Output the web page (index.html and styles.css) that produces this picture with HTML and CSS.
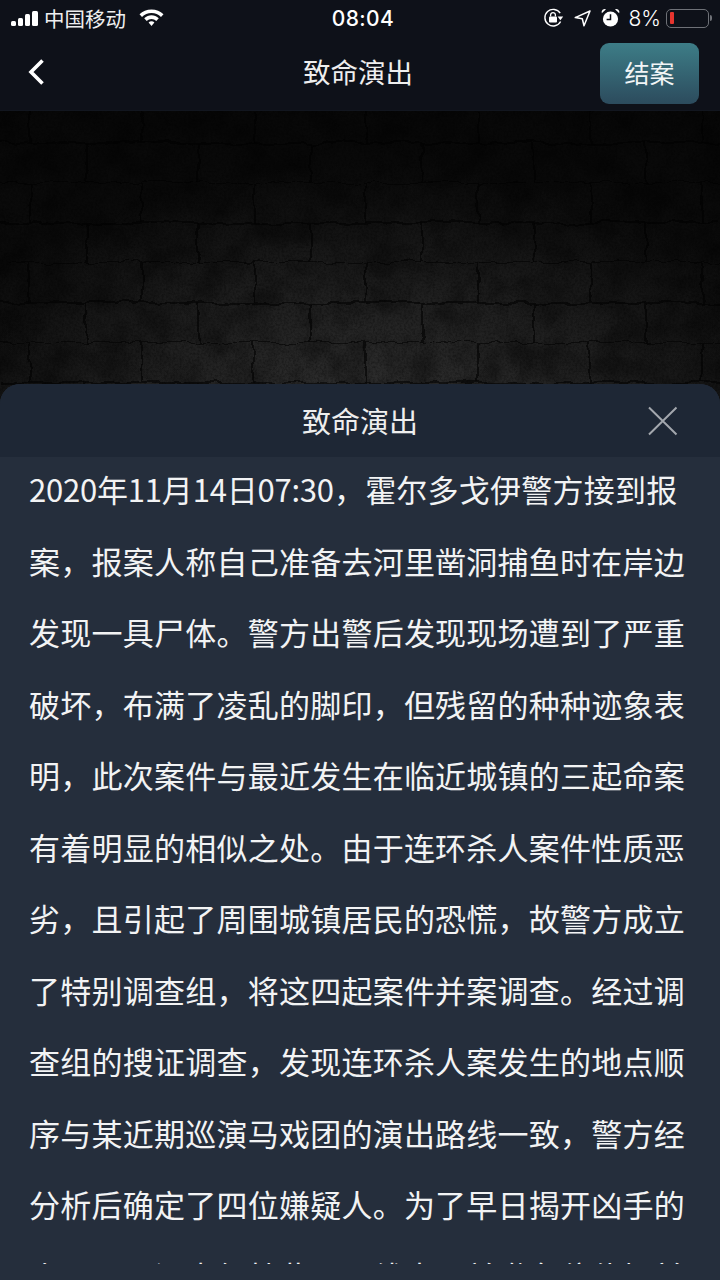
FILE: index.html
```html
<!DOCTYPE html>
<html lang="zh-CN">
  <head>
    <meta charset="UTF-8" />
    <meta name="viewport" content="width=device-width, initial-scale=1.0" />
    <title>致命演出</title>
    <link rel="stylesheet" href="styles.css">
  </head>
  <body>
    <div class="page">
      <header class="top">
        <div class="status">
          <div class="status-left">
            <div class="signal">
              <span class="bar bar-1"></span>
              <span class="bar bar-2"></span>
              <span class="bar bar-3"></span>
              <span class="bar bar-4"></span>
            </div>
            <span class="carrier">中国移动</span>
            <svg class="wifi" width="25" height="18" viewBox="0 0 25 18">
              <path d="M12.5 0.5C7.8 0.5 3.6 2.3 0.5 5.3L3 8C5.5 5.6 8.8 4.1 12.5 4.1S19.5 5.6 22 8L24.5 5.3C21.4 2.3 17.2 0.5 12.5 0.5Z" fill="#fff"/>
              <path d="M12.5 6.3C9.9 6.3 7.3 7.3 5.2 9.3L7.7 12C9 10.7 10.7 9.9 12.5 9.9S16 10.7 17.3 12L19.8 9.3C17.7 7.3 15.1 6.3 12.5 6.3Z" fill="#fff"/>
              <path d="M12.5 12.2C11.4 12.2 10.4 12.6 9.6 13.4L12.5 17L15.4 13.4C14.6 12.6 13.6 12.2 12.5 12.2Z" fill="#fff"/>
            </svg>
          </div>
          <span class="time">08:04</span>
          <div class="status-right">
            <svg class="icon-lock" width="21" height="20" viewBox="0 0 21 20">
              <path d="M17.6 13.5A8.3 8.3 0 1 1 17.2 5.2" fill="none" stroke="#fff" stroke-width="1.4"/>
              <path d="M14.8 9.4H20.4L17.6 13.2Z" fill="#fff" transform="translate(-0.2 -1)"/>
              <rect x="6" y="8.6" width="8" height="6" rx="1" fill="#fff"/>
              <path d="M7.6 8.6V7A2.4 2.4 0 0 1 12.4 7V8.6" fill="none" stroke="#fff" stroke-width="1.3"/>
            </svg>
            <svg class="icon-arrow" width="17" height="17" viewBox="0 0 17 17">
              <path d="M16 1L1.2 7.6L8.3 8.8L10 15.8Z" fill="none" stroke="#fff" stroke-width="1.5" stroke-linejoin="round"/>
            </svg>
            <svg class="icon-alarm" width="19" height="20" viewBox="0 0 19 20">
              <circle cx="9.5" cy="11" r="7.6" fill="#fff"/>
              <path d="M9.5 6.2V11.4H5.6" fill="none" stroke="#0e1119" stroke-width="1.5"/>
              <path d="M0.8 5.2A3.2 3.2 0 0 1 5 1.2Z M18.2 5.2A3.2 3.2 0 0 0 14 1.2Z" fill="#fff"/>
            </svg>
            <span class="percent">8%</span>
            <div class="battery">
              <div class="battery-body"><span class="battery-level"></span></div>
              <span class="battery-tip"></span>
            </div>
          </div>
        </div>
        <nav class="nav">
          <svg class="back" width="18" height="28" viewBox="0 0 18 28">
            <path d="M15.5 2.5L4 14L15.5 25.5" fill="none" stroke="#fff" stroke-width="3.6"/>
          </svg>
          <h1 class="nav-title">致命演出</h1>
          <button class="close-case">结案</button>
        </nav>
      </header>

      <div class="hero">
        <svg class="wall" width="720" height="290" viewBox="0 0 720 290">
          <defs>
            <radialGradient id="wallGlow" gradientUnits="userSpaceOnUse" cx="370" cy="290" r="430" gradientTransform="translate(0 130) scale(1 0.55)">
              <stop offset="0" stop-color="#2f2f2f"/>
              <stop offset="0.55" stop-color="#1f1f1f"/>
              <stop offset="1" stop-color="#0d0d0d"/>
            </radialGradient>
            <linearGradient id="wallFade" x1="0" y1="0" x2="0" y2="1">
              <stop offset="0" stop-color="#000" stop-opacity="0.4"/>
              <stop offset="0.55" stop-color="#000" stop-opacity="0.1"/>
              <stop offset="1" stop-color="#000" stop-opacity="0"/>
            </linearGradient>
            <pattern id="bricks" width="112" height="80" patternUnits="userSpaceOnUse" y="-8">
              <path d="M0 40H112M0 80H112M30 0V40M86 40V80" fill="none" stroke="#050505" stroke-width="1.6" stroke-opacity="0.75"/>
            </pattern>
            <filter id="rough" x="0" y="0" width="100%" height="100%">
              <feTurbulence type="fractalNoise" baseFrequency="0.05" numOctaves="3" seed="7"/>
              <feDisplacementMap in="SourceGraphic" scale="9"/>
            </filter>
            <filter id="grain" x="0" y="0" width="100%" height="100%">
              <feTurbulence type="fractalNoise" baseFrequency="0.45" numOctaves="3" seed="3"/>
              <feColorMatrix values="0 0 0 0 0  0 0 0 0 0  0 0 0 0 0  1.6 0 0 0 -0.6"/>
            </filter>
            <filter id="blotch" x="0" y="0" width="100%" height="100%">
              <feTurbulence type="fractalNoise" baseFrequency="0.03" numOctaves="4" seed="11"/>
              <feColorMatrix values="0 0 0 0 0  0 0 0 0 0  0 0 0 0 0  2.4 0 0 0 -0.9"/>
            </filter>
          </defs>
          <rect width="720" height="290" fill="url(#wallGlow)"/>
          <rect width="720" height="290" filter="url(#blotch)" opacity="0.35"/>
          <rect width="720" height="290" filter="url(#grain)" opacity="0.4"/>
          <rect width="720" height="290" fill="url(#bricks)" filter="url(#rough)"/>
          <rect width="720" height="290" fill="url(#wallFade)"/>
        </svg>
      </div>

      <section class="sheet">
        <div class="sheet-head">
          <h2 class="sheet-title">致命演出</h2>
          <svg class="sheet-close" width="31" height="30" viewBox="0 0 31 30">
            <path d="M2 1.5L29.5 28.5M29.5 1.5L2 28.5" fill="none" stroke="#a3a7ad" stroke-width="2"/>
          </svg>
        </div>
        <div class="sheet-body">
          <p class="story"><span class="date">2020年11月14日07:30</span>，霍尔多戈伊警方接到报案，报案人称自己准备去河里凿洞捕鱼时在岸边发现一具尸体。警方出警后发现现场遭到了严重破坏，布满了凌乱的脚印，但残留的种种迹象表明，此次案件与最近发生在临近城镇的三起命案有着明显的相似之处。由于连环杀人案件性质恶劣，且引起了周围城镇居民的恐慌，故警方成立了特别调查组，将这四起案件并案调查。经过调查组的搜证调查，发现连环杀人案发生的地点顺序与某近期巡演马戏团的演出路线一致，警方经分析后确定了四位嫌疑人。为了早日揭开凶手的真面目，调查组特此公开线索，并邀各位侦探前往协助调查。</p>
        </div>
      </section>
    </div>
  </body>
</html>
```
FILE: styles.css
```css
* {
  box-sizing: border-box;
}
body {
  margin: 0;
  padding: 0;
  background-color: #0e1119;
  font-family: "Noto Sans CJK SC", "Liberation Sans", sans-serif;
  color: #fff;
}
.page {
  display: flex;
  flex-direction: column;
  width: 720px;
  height: 1280px;
  overflow: hidden;
}
.top {
  height: 110px;
  flex-shrink: 0;
  background-color: #0e1119;
}
.status {
  display: flex;
  align-items: center;
  justify-content: space-between;
  height: 36px;
  padding: 0 8px 0 11px;
}
.status-left,
.status-right {
  display: flex;
  align-items: center;
  flex: 1;
}
.status-right {
  justify-content: flex-end;
}
.signal {
  display: flex;
  align-items: flex-end;
  gap: 2px;
  height: 15px;
}
.bar {
  width: 5px;
  border-radius: 1.5px;
  background-color: #fff;
}
.bar-1 {
  height: 5px;
}
.bar-2 {
  height: 8px;
}
.bar-3 {
  height: 12px;
}
.bar-4 {
  height: 15px;
  width: 6px;
}
.carrier {
  margin-left: 6px;
  font-size: 20.5px;
  line-height: 36px;
  color: #eeeff0;
}
.wifi {
  margin-left: 13px;
}
.time {
  margin-left: 3px;
  font-family: "Inter", "Liberation Sans", sans-serif;
  font-size: 21px;
  font-weight: 500;
  letter-spacing: 0.4px;
}
.icon-lock {
  margin-right: 10px;
}
.icon-arrow {
  margin-right: 10px;
}
.icon-alarm {
  margin-right: 9px;
}
.percent {
  font-family: "Inter", "Liberation Sans", sans-serif;
  font-size: 21px;
  font-weight: 300;
  margin-right: 5px;
}
.battery {
  display: flex;
  align-items: center;
}
.battery-body {
  display: flex;
  align-items: center;
  width: 43px;
  height: 19px;
  padding: 0 3px;
  border: 1.5px solid #6e7177;
  border-radius: 5px;
}
.battery-level {
  width: 4px;
  height: 12px;
  border-radius: 1px;
  background-color: #e6342e;
}
.battery-tip {
  width: 2px;
  height: 6px;
  margin-left: 1px;
  border-radius: 0 2px 2px 0;
  background-color: #6e7177;
}
.nav {
  display: grid;
  grid-template-columns: 1fr auto 1fr;
  align-items: center;
  height: 74px;
  padding: 0 21px 4px 27px;
}
.back {
  margin-top: 1px;
}
.nav-title {
  margin: 0 10px 0 0;
  font-size: 27.5px;
  font-weight: 400;
  line-height: 40px;
  color: #eee;
}
.close-case {
  justify-self: end;
  width: 99px;
  height: 61px;
  margin-top: 4px;
  padding: 0 0 3px;
  border: none;
  border-radius: 9px;
  background: linear-gradient(#3d7d87, #2c4b5d);
  color: #f2f5f6;
  font-family: inherit;
  font-size: 25px;
}
.hero {
  height: 290px;
  flex-shrink: 0;
  border-top: 1px solid #12161f;
}
.wall {
  display: block;
}
.sheet {
  position: relative;
  display: flex;
  flex-direction: column;
  flex: 1;
  min-height: 0;
  margin-top: -16px;
  border-radius: 20px 20px 0 0;
  overflow: hidden;
  background-color: #252e3c;
}
.sheet-head {
  position: relative;
  display: flex;
  align-items: center;
  justify-content: center;
  height: 73px;
  flex-shrink: 0;
  background-color: #1e2735;
}
.sheet-title {
  margin: 0;
  font-size: 29px;
  font-weight: 400;
  line-height: 73px;
  color: #eee;
}
.sheet-close {
  position: absolute;
  top: 22px;
  right: 42px;
}
.sheet-body {
  height: 807px;
  overflow: hidden;
  padding: 0 29px;
}
.story {
  margin: -4px 0 0;
  font-size: 31px;
  letter-spacing: 0.24px;
  line-height: 71.5px;
  color: #f2f3f4;
}
.date {
  letter-spacing: -0.2px;
}
```
